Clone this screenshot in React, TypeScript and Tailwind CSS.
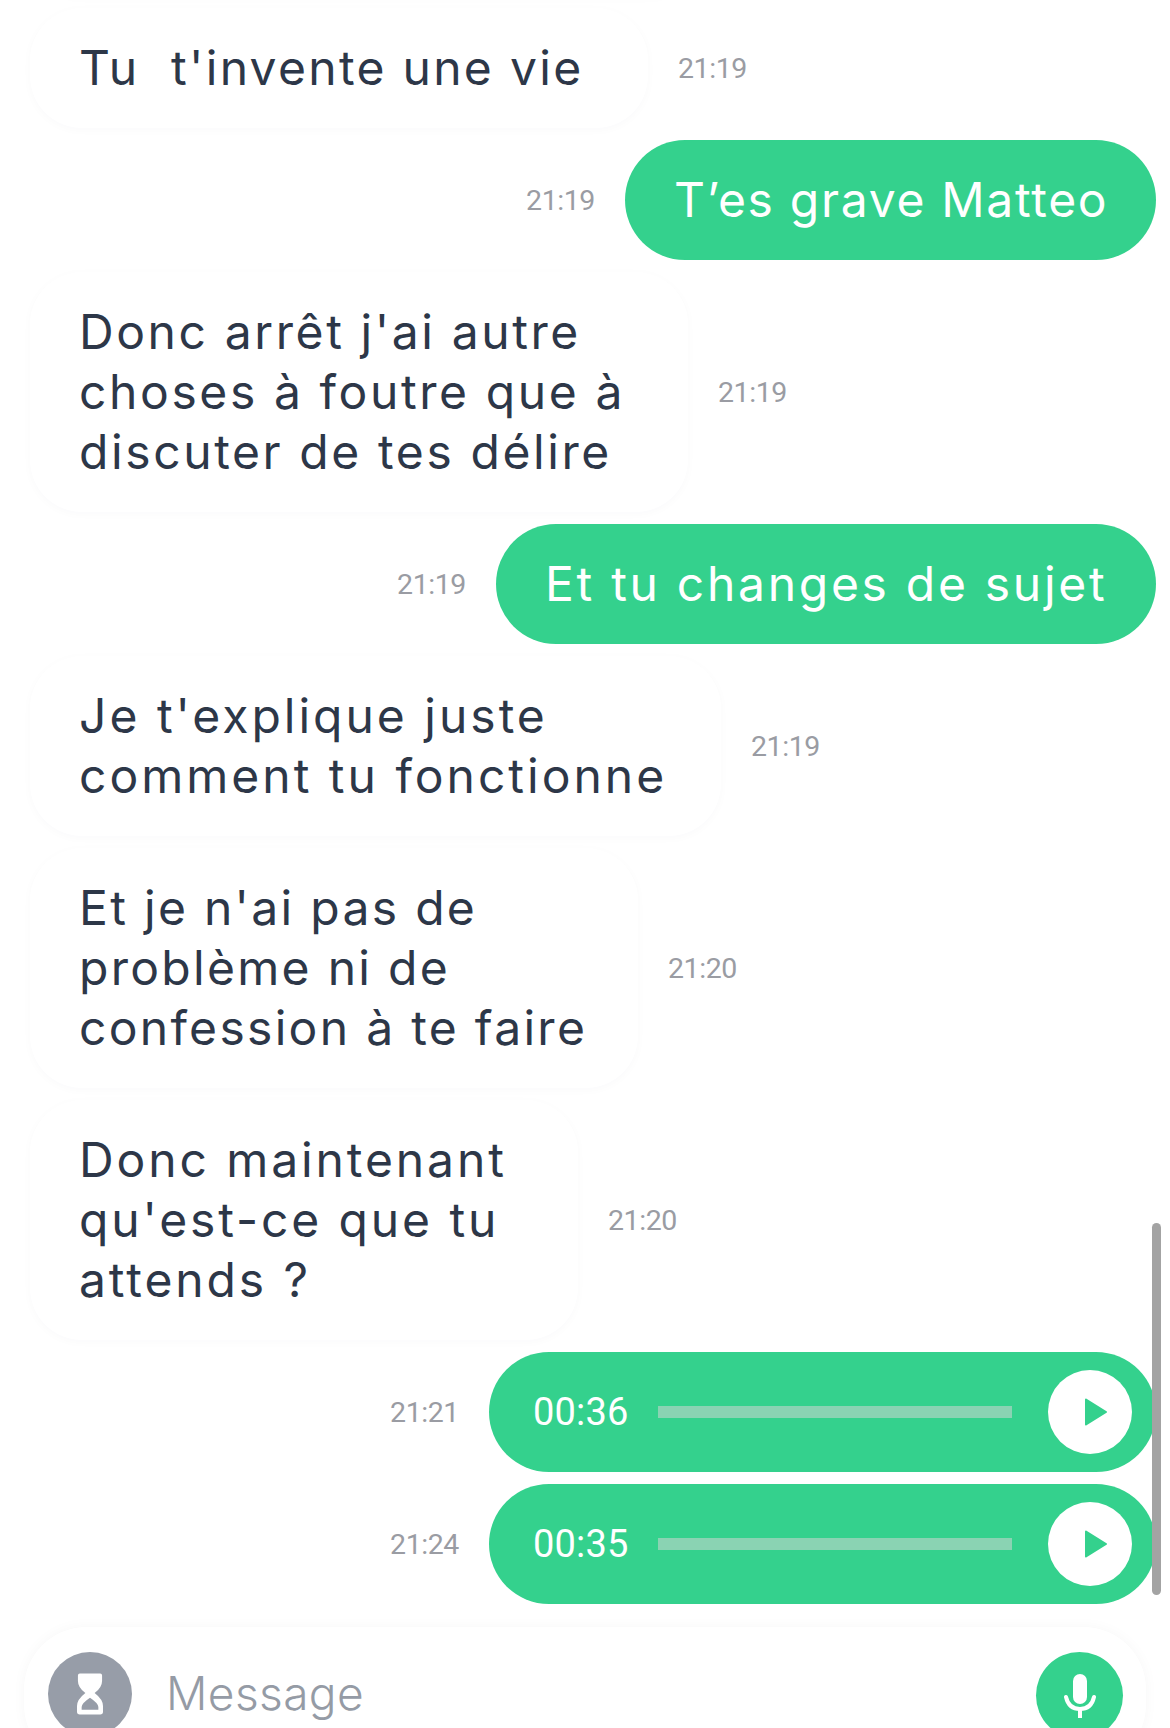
import { Fragment } from 'react';

type Msg = { lines: string[]; time: string; width: string; tracking: string };

const BODY_FONT = "font-['Inter','Noto_Sans',sans-serif]";

const Time = ({ value }: { value: string }) => (
    <span className="pt-[2px] font-['Roboto',sans-serif] text-[28.5px] tracking-[-0.4px] text-[#9a9ca3]">{value}</span>
);

const Incoming = ({ lines, time, width, tracking }: Msg) => (
    <div className="flex items-center gap-[30px] pl-[30px]">
        <div className={`${width} ${tracking} rounded-[52px] bg-white pl-[49px] py-[30px] shadow-[0_2px_10px_rgba(40,50,70,0.025)] text-[48px] leading-[60px] text-[#2d3748] whitespace-nowrap`}>
            {lines.map((l, i) => (
                <Fragment key={i}>
                    {l}
                    {i < lines.length - 1 && <br />}
                </Fragment>
            ))}
        </div>
        <Time value={time} />
    </div>
);

const Outgoing = ({ text, time, width, tracking }: { text: string; time: string; width: string; tracking: string }) => (
    <div className="flex items-center justify-end gap-[30px] pr-[14px]">
        <Time value={time} />
        <div className={`${width} ${tracking} h-[120px] flex items-center rounded-[60px] bg-[#34d18d] pl-[49px] text-[48px] text-white whitespace-nowrap`}>
            {text}
        </div>
    </div>
);

const Audio = ({ duration, time }: { duration: string; time: string }) => (
    <div className="flex items-center justify-end gap-[30px] pr-[14px]">
        <Time value={time} />
        <div className="w-[667px] h-[120px] flex items-center rounded-[60px] bg-[#34d18d] pl-[44px] pr-[24px]">
            <span className="w-[125px] font-['Roboto',sans-serif] text-[38px] tracking-[0.2px] text-white">{duration}</span>
            <div className="w-[354px] h-[12px] bg-[#8ad3b3]" />
            <div className="ml-[36px] w-[84px] h-[84px] rounded-full bg-white flex items-center justify-center">
                <svg width="24" height="28" viewBox="0 0 24 28" className="ml-[12px]">
                    <path d="M2 1.5 L22 14 L2 26.5 Z" fill="#34d18d" stroke="#34d18d" strokeWidth="2" strokeLinejoin="round" />
                </svg>
            </div>
        </div>
    </div>
);

export default function App() {
    return (
        <div className={`relative w-[1170px] h-[1728px] overflow-hidden bg-white ${BODY_FONT}`}>
            <div className="flex flex-col gap-[12px] pt-[8px]">
                {/* bottom edge of the previous bubble, scrolled away */}
                <div className="-mt-[132px] ml-[30px] w-[670px] h-[120px] rounded-[52px] bg-white shadow-[0_2px_10px_rgba(40,50,70,0.025)]" />
                <Incoming lines={["Tu\u00a0 t'invente une vie"]} time="21:19" width="w-[618px]" tracking="tracking-[2.3px]" />
                <Outgoing text="T’es grave Matteo" time="21:19" width="w-[531px]" tracking="tracking-[1.7px]" />
                <Incoming lines={["Donc arrêt j'ai autre", 'choses à foutre que à', 'discuter de tes délire']} time="21:19" width="w-[658px]" tracking="tracking-[2.6px]" />
                <Outgoing text="Et tu changes de sujet" time="21:19" width="w-[660px]" tracking="tracking-[2.7px]" />
                <Incoming lines={["Je t'explique juste", 'comment tu fonctionne']} time="21:19" width="w-[691px]" tracking="tracking-[3px]" />
                <Incoming lines={["Et je n'ai pas de", 'problème ni de', 'confession à te faire']} time="21:20" width="w-[608px]" tracking="tracking-[2.3px]" />
                <Incoming lines={['Donc maintenant', "qu'est-ce que tu", 'attends ?']} time="21:20" width="w-[548px]" tracking="tracking-[2.9px]" />
                <Audio duration="00:36" time="21:21" />
                <Audio duration="00:35" time="21:24" />
            </div>

            <div className="mt-[23px] mx-[24px] h-[140px] rounded-[62px] bg-white shadow-[0_0_14px_rgba(40,50,70,0.035)] flex items-start pt-[25px] pl-[24px] pr-[23px]">
                <div className="w-[84px] h-[84px] shrink-0 rounded-full bg-[#979da8] flex items-center justify-center">
                    <svg width="26" height="44" viewBox="0 0 28 44">
                        <path
                            fillRule="evenodd"
                            fill="#ffffff"
                            d="M3 0 H25 Q27 0 27 2 V8 Q27 15 19 21 Q28 28 28 35 V41 Q28 44 25 44 H3 Q0 44 0 41 V35 Q0 28 9 21 Q1 15 1 8 V2 Q1 0 3 0 Z M14 26 Q5 32 5 36 V39 H23 V36 Q23 32 14 26 Z"
                        />
                    </svg>
                </div>
                <span className="ml-[34px] mt-[9px] text-[46px] leading-[64px] tracking-[0.4px] font-light text-[#959ba5]">Message</span>
                <div className="ml-auto w-[87px] h-[87px] shrink-0 rounded-full bg-[#34d18d] flex items-center justify-center">
                    <svg width="32" height="44" viewBox="0 0 32 44" fill="none">
                        <rect x="9" y="0" width="14" height="30" rx="7" fill="#ffffff" />
                        <path d="M2 23 C4 32 10 35 16 35 C22 35 28 32 30 23" stroke="#ffffff" strokeWidth="4" strokeLinecap="round" />
                        <rect x="14" y="34" width="4" height="10" fill="#ffffff" />
                    </svg>
                </div>
            </div>

            {/* scrollbar */}
            <div className="absolute left-[1152px] top-[1223px] w-[9px] h-[372px] rounded-full bg-[#a3a3a3]" />
        </div>
    );
}
